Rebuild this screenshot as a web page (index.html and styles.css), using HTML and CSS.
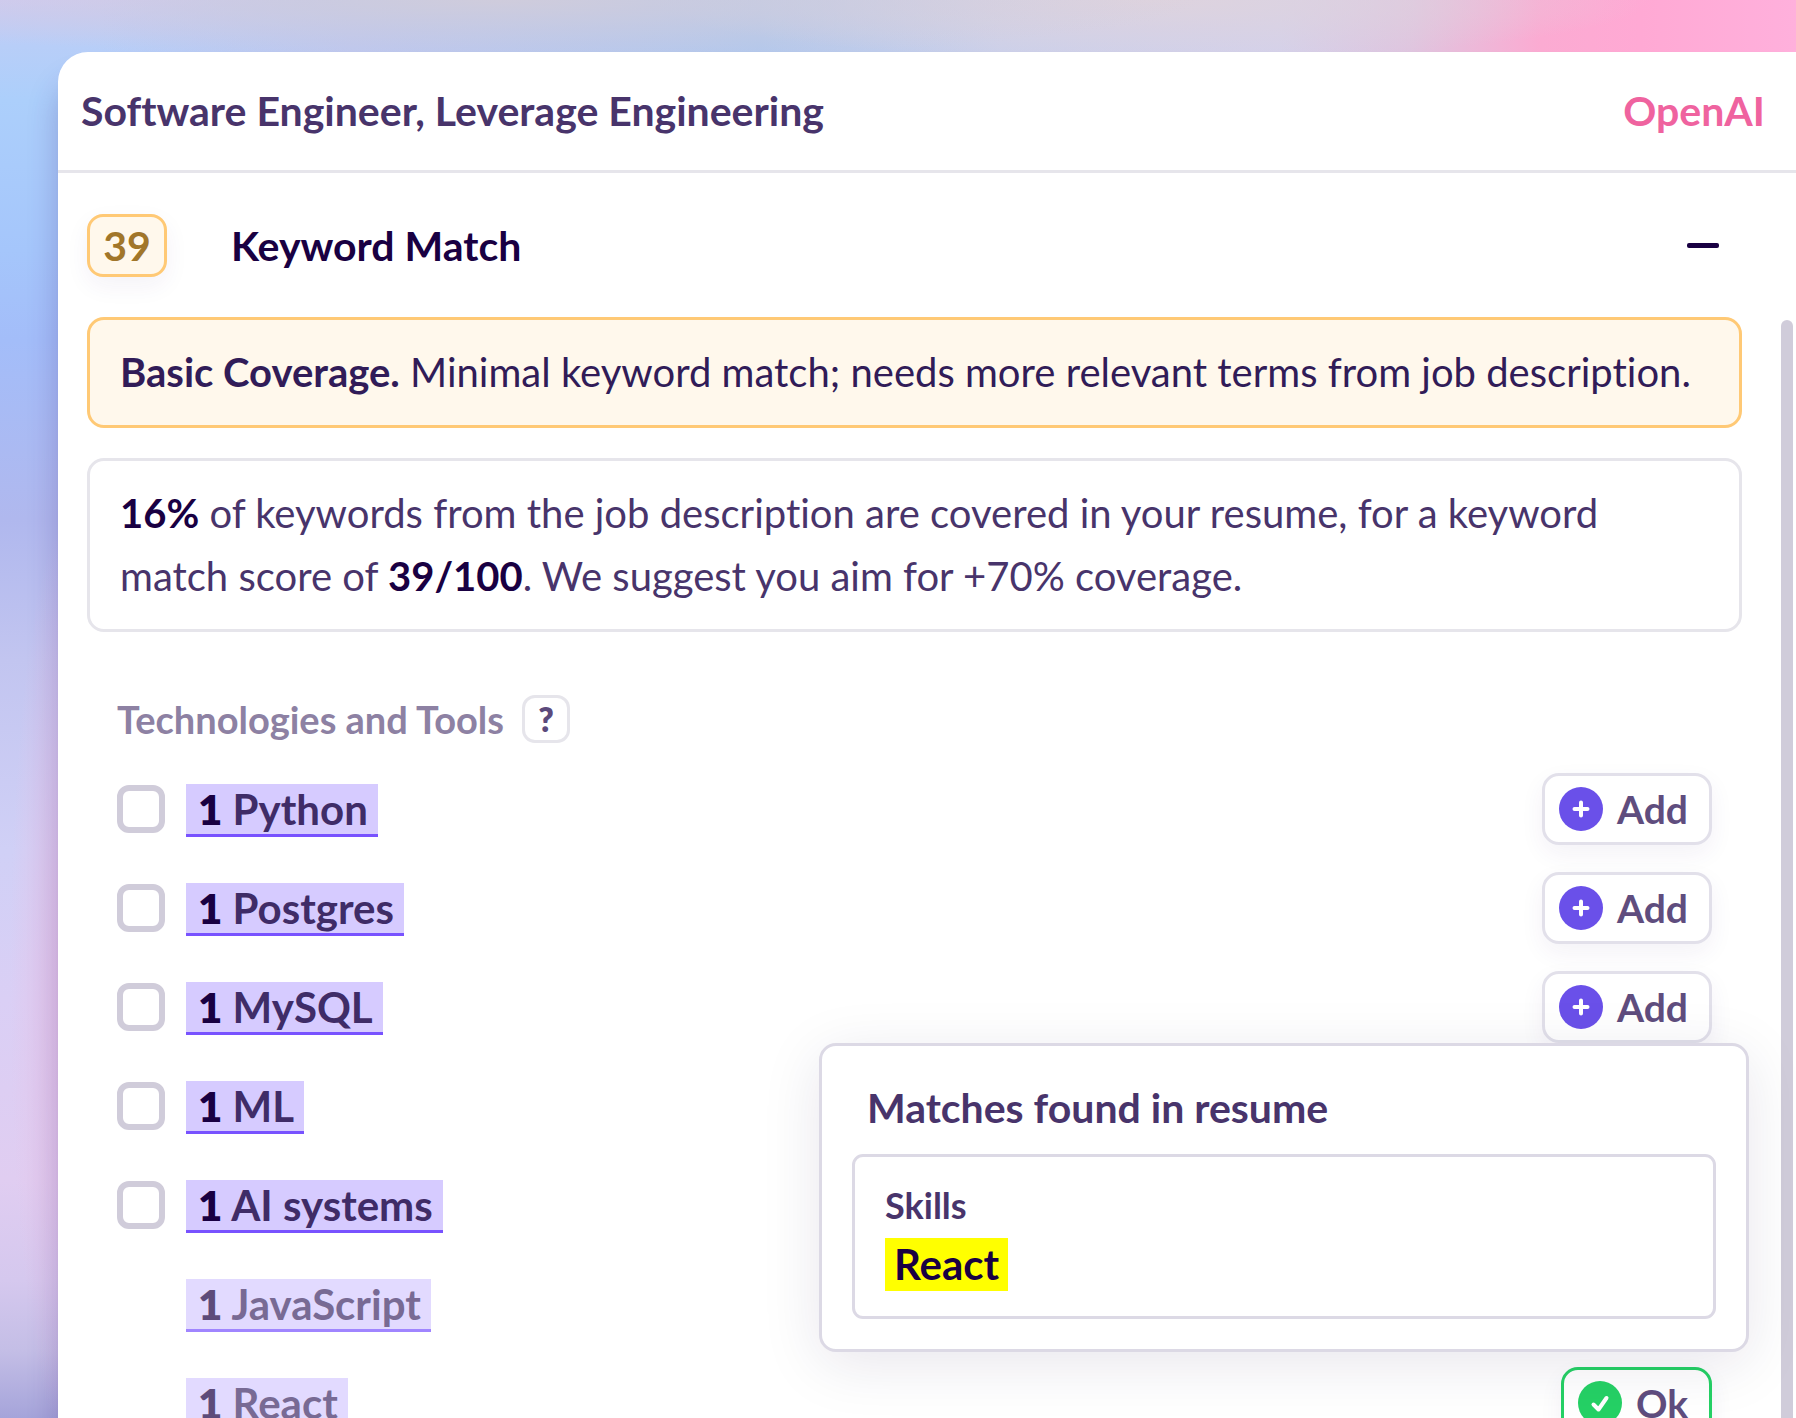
FILE: index.html
```html
<!DOCTYPE html>
<html lang="en">
<head>
<meta charset="utf-8">
<meta name="viewport" content="width=device-width, initial-scale=1">
<title>Keyword Match</title>
<link rel="stylesheet" href="styles.css">
</head>
<body>
<svg class="sprite" aria-hidden="true">
  <symbol id="plus" viewBox="0 0 44 44"><circle cx="22" cy="22" r="22" fill="#6a50e9"/><path d="M22 15.500v13M15.500 22h13" fill="none" stroke="#fff" stroke-width="4" stroke-linecap="round"/></symbol>
  <symbol id="check" viewBox="0 0 44 44"><circle cx="22" cy="22" r="22" fill="#25d165"/><path d="M15.500 23.500l5 5L28.500 17" fill="none" stroke="#fff" stroke-width="4" stroke-linecap="round" stroke-linejoin="round"/></symbol>
</svg>
<main class="card">
  <header class="card-header">
    <h1 class="job-title">Software Engineer, Leverage Engineering</h1>
    <a class="company" href="#">OpenAI</a>
  </header>
  <section class="section">
    <div class="section-header">
      <span class="score">39</span>
      <h2 class="section-title">Keyword Match</h2>
      <button class="collapse" type="button" aria-label="Collapse section"><svg width="32" height="6" viewBox="0 0 32 6"><rect width="32" height="5" rx="2" fill="#190042"/></svg></button>
    </div>
    <div class="scroll-area">
      <div class="content">
        <p class="note note-warning"><strong>Basic Coverage.</strong> Minimal keyword match; needs more relevant terms from job description.</p>
        <p class="note note-summary"><strong>16%</strong> of keywords from the job description are covered in your resume, for a keyword match score of <strong>39/100</strong>. We suggest you aim for +70% coverage.</p>
        <div class="group">
          <div class="group-header">
            <h3 class="group-title">Technologies and Tools</h3>
            <button class="help" type="button" aria-label="Help">?</button>
          </div>
          <ul class="keywords">
            <li class="keyword"><input class="tick" type="checkbox" id="python"><label class="chip" for="python"><b>1</b> Python</label><button class="action" type="button"><svg class="icon"><use href="#plus"/></svg>Add</button></li>
            <li class="keyword"><input class="tick" type="checkbox" id="postgres"><label class="chip" for="postgres"><b>1</b> Postgres</label><button class="action" type="button"><svg class="icon"><use href="#plus"/></svg>Add</button></li>
            <li class="keyword"><input class="tick" type="checkbox" id="mysql"><label class="chip" for="mysql"><b>1</b> MySQL</label><button class="action" type="button"><svg class="icon"><use href="#plus"/></svg>Add</button></li>
            <li class="keyword"><input class="tick" type="checkbox" id="ml"><label class="chip" for="ml"><b>1</b> ML</label></li>
            <li class="keyword"><input class="tick" type="checkbox" id="ai"><label class="chip" for="ai"><b>1</b> AI systems</label></li>
            <li class="keyword matched"><span class="chip"><b>1</b> JavaScript</span></li>
            <li class="keyword matched"><span class="chip"><b>1</b> React</span><button class="action action-ok" type="button"><svg class="icon"><use href="#check"/></svg>Ok</button>
              <div class="popover" role="tooltip">
                <h4 class="popover-title">Matches found in resume</h4>
                <div class="match">
                  <p class="match-section">Skills</p>
                  <mark class="match-term">React</mark>
                </div>
              </div>
            </li>
          </ul>
        </div>
      </div>
      <div class="scrollbar"></div>
    </div>
  </section>
</main>
</body>
</html>
```
FILE: styles.css
```css
* { box-sizing: border-box; }

body {
  margin: 0;
  height: 100vh;
  overflow: hidden;
  display: flex;
  padding: 52px 0 0 58px;
  font-family: Lato, "Liberation Sans", sans-serif;
  font-size: 42px;
  line-height: 63px;
  font-variant-ligatures: no-common-ligatures;
  color: #48346b;
  background:
    radial-gradient(700px 60px at 500px 0, #cfccdc, #cfccdc00),
    radial-gradient(500px 60px at 1150px 0, #ded3de, #ded3de00),
    linear-gradient(90deg, #b9cbf500 100px, #bdc7ef 350px, #b3c8ec 760px, #cbd0ea 1000px, #d4d1ea 1280px, #dfc5df 1410px, #fbabd2 1540px, #ffa9d4 1640px, #ffb0dc 1796px),
    radial-gradient(60px 460px at 70px 980px, #e6c3e8, #e6c3e800),
    linear-gradient(180deg, #cfcaf3 0, #b8cef8 45px, #accffb 100px, #a5c6fb 250px, #a3bdf9 340px, #b0b8ee 520px, #c2c5f0 660px, #d0d0f6 850px, #dacff5 1000px, #e0cdf1 1180px, #d5c8ee 1280px, #c4bee6 1350px, #a5a4da 1418px);
}

h1, h2, h3, h4, p, ul { margin: 0; padding: 0; font-size: inherit; font-weight: inherit; }
button { font: inherit; color: inherit; padding: 0; border: 0; background: none; cursor: pointer; }
strong { font-weight: 700; color: #190042; }
b { font-weight: 800; color: #190042; }
.sprite { position: absolute; width: 0; height: 0; }

.card {
  flex: 1;
  min-width: 0;
  display: flex;
  flex-direction: column;
  background: #fff;
  border-top-left-radius: 30px;
  box-shadow: 0 30px 30px #3c1e7844;
}

.card-header {
  display: flex;
  justify-content: space-between;
  padding: 27px 31px 28px 23px;
  border-bottom: 3px solid #e6e5eb;
  font-size: 41px;
  font-weight: 700;
}
.company { color: #ef639f; text-decoration: none; }

.section { flex: 1; min-height: 0; display: flex; flex-direction: column; }
.section-header { display: flex; align-items: center; padding: 41px 54px 40px 29px; }
.score {
  width: 80px;
  height: 63px;
  border: 3px solid #ffc975;
  border-radius: 16px;
  background: #fff8ec;
  box-shadow: 0 9px 24px #3c1e780f;
  color: #a1762a;
  font-size: 41px;
  font-weight: 700;
  line-height: 57px;
  text-align: center;
}
.section-title { flex: 1; margin-left: 64px; font-size: 41px; font-weight: 700; color: #190042; }
.collapse { width: 78px; height: 48px; display: flex; align-items: center; justify-content: center; }

.scroll-area { flex: 1; min-height: 0; display: flex; justify-content: space-between; overflow: hidden; padding: 0 3px 0 29px; }
.content { flex: 1; margin-right: 39px; display: flex; flex-direction: column; gap: 30px; }
.scrollbar { width: 12px; margin-top: 3px; border-radius: 6px 6px 0 0; background: #d0ccda; }

.note { padding: 21px 30px; border: 3px solid #e6e5eb; border-radius: 17px; font-size: 40px; }
.note-warning { border-color: #ffc975; background: #fff8ec; color: #311c58; }
.note-warning strong { color: inherit; }
.note-summary { padding-right: 60px; }

.group { padding: 33px 30px 0; }
.group-header { display: flex; align-items: center; gap: 18px; height: 48px; margin-bottom: 30px; }
.group-title { font-size: 38px; font-weight: 700; color: #8d81a3; }
.help { width: 48px; height: 48px; border: 3px solid #e6e5eb; border-radius: 13px; font-size: 33px; line-height: 42px; font-weight: 800; color: #5c4a7c; }

.keywords { list-style: none; display: flex; flex-direction: column; gap: 27px; }
.keyword { position: relative; display: flex; align-items: center; height: 72px; }
.tick { appearance: none; width: 48px; height: 48px; margin: 0 21px 0 0; border: 6px solid #d0ccda; border-radius: 12px; background: #fff; }
.chip { margin-top: 2px; padding: 0 10px 0 12px; border-bottom: 3px solid #7852ff; background: #d6cbff; color: #3f2c67; font-weight: 700; line-height: 50px; }
.matched { padding-left: 69px; }
.matched .chip { opacity: .7; }

.action {
  display: flex;
  align-items: center;
  gap: 14px;
  height: 72px;
  margin-left: auto;
  padding: 0 21px 0 14px;
  border: 3px solid #e2e0ea;
  border-radius: 17px;
  background: #fff;
  box-shadow: 0 9px 24px #3c1e780f;
  color: #5f4d7e;
  font-size: 39px;
  font-weight: 700;
}
.action-ok { border-color: #25d165; }
.icon { width: 44px; height: 44px; }

.popover {
  position: absolute;
  right: -37px;
  bottom: calc(100% + 15px);
  width: 930px;
  padding: 30px;
  border: 3px solid #dcd9e5;
  border-radius: 17px;
  background: #fff;
  box-shadow: 0 12px 60px #1900421a;
}
.popover-title { padding: 0 15px 15px; font-size: 41px; font-weight: 700; }
.match { padding: 20px 30px 25px; border: 3px solid #dcd9e5; border-radius: 11px; }
.match-section { font-size: 36px; font-weight: 700; line-height: 56px; }
.match-term { display: block; width: fit-content; margin-top: 5px; padding: 0 9px; background: #ff0; color: #190042; font-weight: 700; line-height: 53px; }
```
